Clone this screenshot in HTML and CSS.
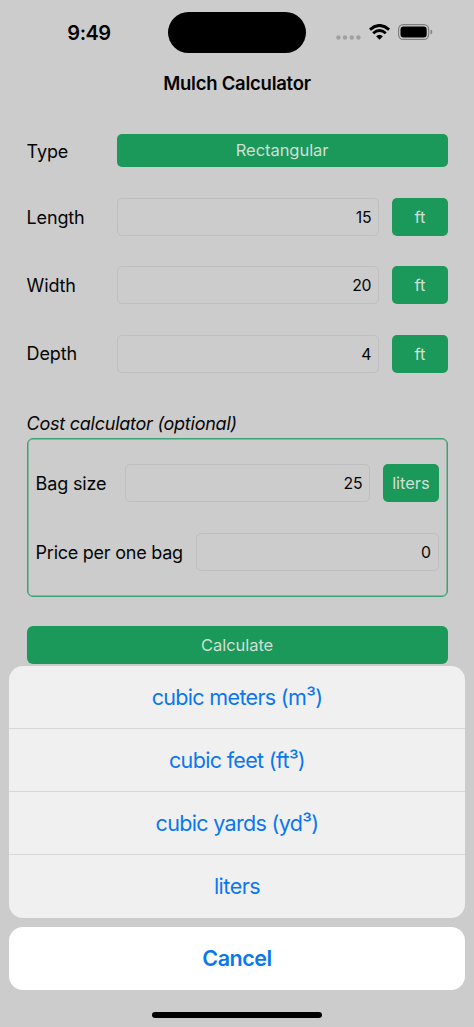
FILE: index.html
```html
<!DOCTYPE html>
<html lang="en">
<head>
<meta charset="utf-8">
<title>Mulch Calculator</title>
<link rel="stylesheet" href="styles.css">
</head>
<body>
<div class="screen">
  <header class="status">
    <div class="time">9:49</div>
    <div class="island"></div>
    <div class="indicators">
      <svg class="dots" width="25" height="5" viewBox="0 0 25 5"><circle cx="2.4" cy="2.5" r="2.2"/><circle cx="9" cy="2.5" r="2.2"/><circle cx="15.8" cy="2.5" r="2.2"/><circle cx="22.4" cy="2.5" r="2.2"/></svg>
      <svg class="wifi" width="21" height="16" viewBox="0 0 21 16"><path d="M.9 5.6 Q10.5 -2.6 20.1 5.6" stroke-width="3"/><path d="M4.2 9.3 Q10.5 3.7 16.8 9.3" stroke-width="2.8"/><path class="fill" d="M7.1 12.2 Q10.5 9.2 13.9 12.2 L10.5 15.7 Z"/></svg>
      <svg class="battery" width="35" height="16" viewBox="0 0 35 16"><rect class="shell" x=".6" y=".6" width="30" height="14.8" rx="4.6"/><rect x="2.5" y="2.5" width="26.2" height="11" rx="3"/><path class="cap" d="M32.5 5.6 Q34.4 6.3 34.4 8 Q34.4 9.7 32.5 10.4 Z"/></svg>
    </div>
  </header>
  <h1 class="title">Mulch Calculator</h1>
  <main class="form">
    <div class="row type-row"><span class="label">Type</span><div class="button wide">Rectangular</div></div>
    <div class="row"><span class="label">Length</span><div class="field">15</div><div class="button unit">ft</div></div>
    <div class="row"><span class="label">Width</span><div class="field">20</div><div class="button unit">ft</div></div>
    <div class="row"><span class="label">Depth</span><div class="field">4</div><div class="button unit">ft</div></div>
    <h2 class="section">Cost calculator (optional)</h2>
    <div class="cost">
      <div class="row"><span class="label bag">Bag size</span><div class="field">25</div><div class="button unit">liters</div></div>
      <div class="row"><span class="label price">Price per one bag</span><div class="field">0</div></div>
    </div>
    <div class="button calculate">Calculate</div>
  </main>
  <div class="sheet">
    <div class="options">
      <div class="option">cubic meters (m³)</div>
      <div class="option">cubic feet (ft³)</div>
      <div class="option">cubic yards (yd³)</div>
      <div class="option">liters</div>
    </div>
    <div class="cancel">Cancel</div>
    <div class="home"></div>
  </div>
</div>
</body>
</html>
```
FILE: styles.css
```css
* { box-sizing: border-box; }
body { margin: 0; background: #ccc; font-family: Inter, "Liberation Sans", sans-serif; color: #050505; }
.screen { position: relative; width: 474px; height: 1027px; overflow: hidden; background: #ccc; }
.status { display: grid; grid-template-columns: 168px 138px 168px; height: 65px; align-items: center; }
.time { padding-left: 10px; text-align: center; font-size: 20px; font-weight: 600; letter-spacing: -0.5px; }
.island { height: 41px; border-radius: 21px; background: #000; }
.indicators { display: flex; align-items: center; padding-left: 30px; }
.dots { margin-top: 9px; fill: #a0a0a0; }
.wifi { margin-left: 8px; margin-top: -2px; fill: none; stroke: #000; }
.wifi .fill { fill: #000; stroke: none; }
.battery { margin-left: 8px; margin-top: -1px; }
.battery .shell { fill: none; stroke: #808080; stroke-width: 1.2; }
.battery .cap { fill: #808080; }
.title { margin: 0; height: 37px; line-height: 37px; text-align: center; font-size: 18.5px; font-weight: 600; letter-spacing: -0.25px; }
.form { padding: 32px 26.4px 0 26.6px; }
.row { display: flex; align-items: center; height: 38px; margin-bottom: 30.3px; gap: 13px; }
.type-row { height: 33px; margin-bottom: 31px; }
.label { flex: none; width: 77px; font-size: 18px; letter-spacing: -0.15px; white-space: nowrap; }
.type-row .label { padding-top: 2px; }
.bag { width: 76.4px; }
.price { width: 147.4px; letter-spacing: -0.25px; }
.cost .label { padding-top: 1px; }
.field { flex: 1; height: 38px; padding-right: 7px; border: 1px solid #bfbfc1; border-radius: 5px; line-height: 37px; text-align: right; font-size: 15.8px; letter-spacing: -0.3px; }
.button { border-radius: 5px; background: #1b995b; color: #d0dfd4; text-align: center; font-size: 16.5px; letter-spacing: -0.05px; }
.wide { flex: 1; height: 33px; line-height: 33px; }
.unit { width: 55.4px; height: 38px; line-height: 38px; }
.section { margin: 0; padding-top: 7px; height: 35.5px; line-height: 28px; font-size: 18px; font-weight: 400; font-style: italic; letter-spacing: -0.25px; }
.cost { height: 159px; padding: 25px 8px 0; border: 1px solid #3ca174; border-radius: 6px; box-shadow: inset 0 0 0 0.5px #3ca174; }
.calculate { height: 38px; margin-top: 28.5px; line-height: 38px; border-radius: 6px; }
.sheet { position: absolute; left: 9px; right: 9px; top: 666px; bottom: 0; color: #0b77ef; text-align: center; }
.options { overflow: hidden; height: 252px; border-radius: 14px; background: #f0f0f0; }
.option { height: 63px; line-height: 63px; font-size: 21.5px; letter-spacing: -0.67px; border-bottom: 1px solid #d6d7d7; }
.option:last-child { border-bottom: 0; letter-spacing: -0.5px; }
.cancel { height: 63px; margin-top: 9px; line-height: 63px; border-radius: 14px; background: #fff; font-size: 21.5px; font-weight: 600; letter-spacing: -0.45px; }
.home { width: 170px; height: 6px; margin: 22px auto 0; border-radius: 3px; background: #000; }
```
